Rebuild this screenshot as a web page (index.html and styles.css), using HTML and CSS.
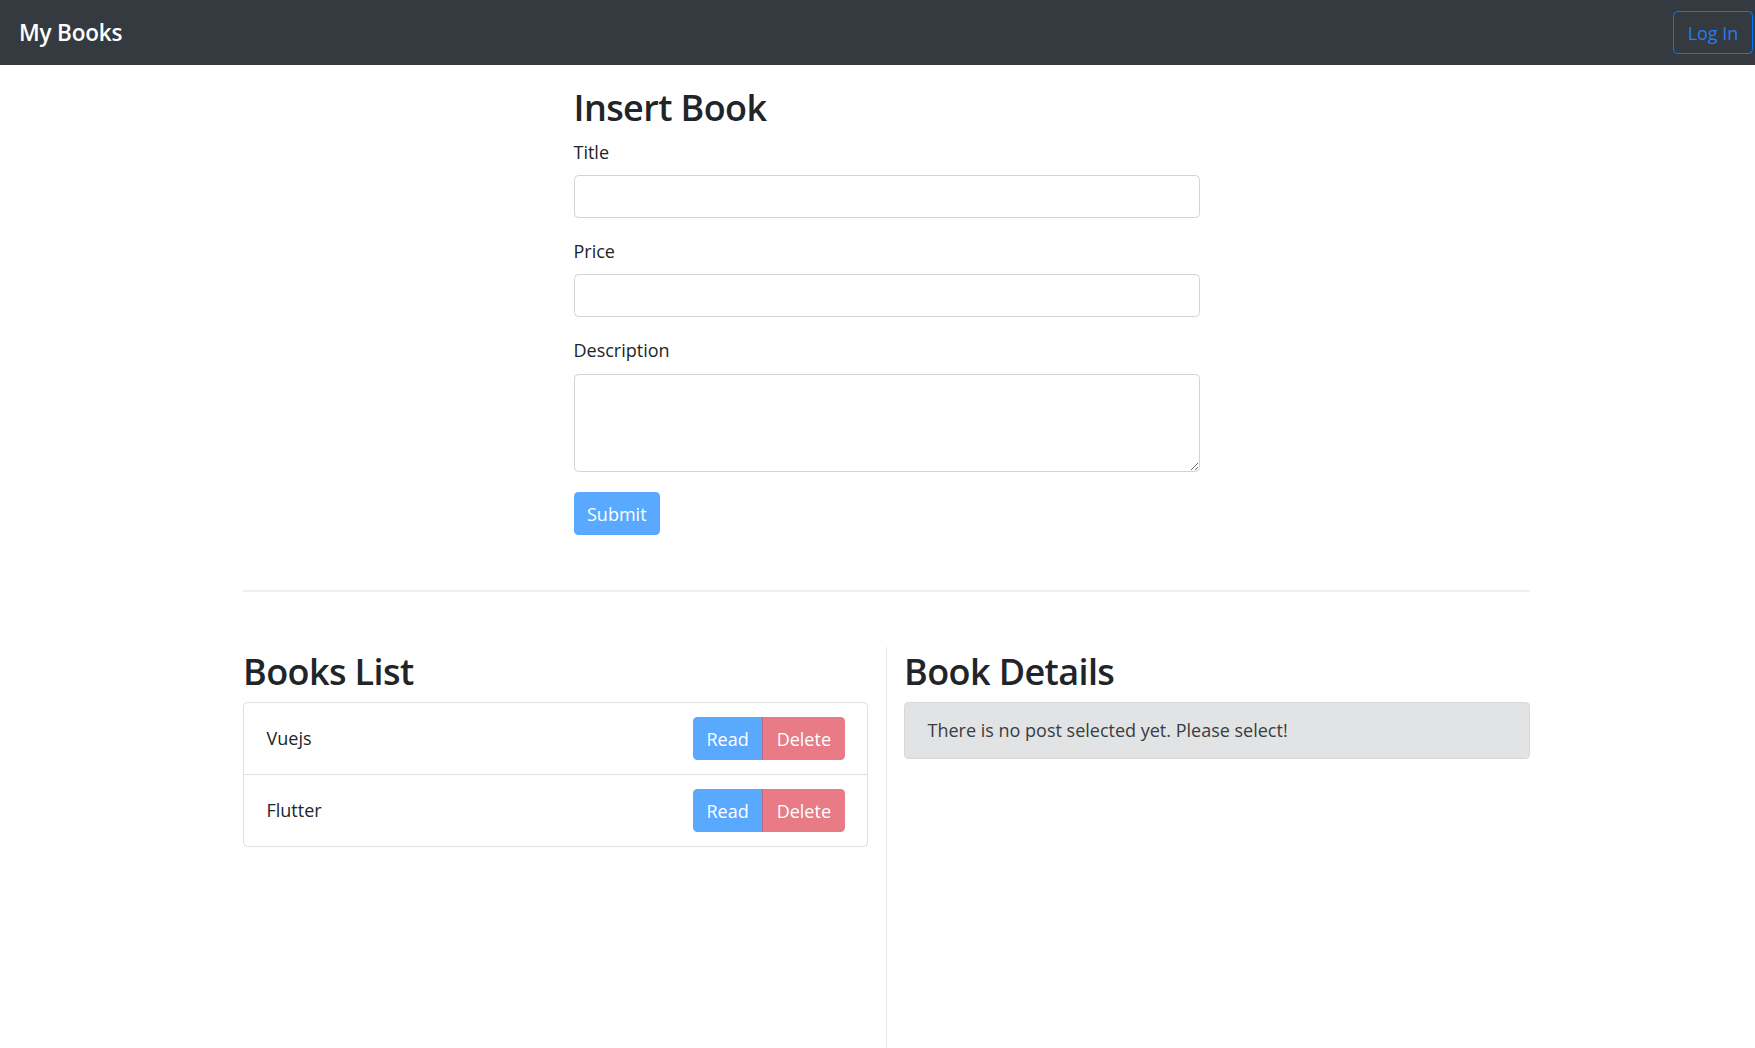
FILE: index.html
```html
<!DOCTYPE html>
<html lang="en">
<head>
<meta charset="utf-8">
<title>My Books</title>
<link rel="stylesheet" href="styles.css">
</head>
<body>
<nav class="navbar">
  <a class="brand" href="#">My Books</a>
  <button class="btn-login" type="button">Log In</button>
</nav>
<main class="container">
  <section class="insert">
    <h2 class="heading">Insert Book</h2>
    <form>
      <div class="form-group">
        <label for="title">Title</label>
        <input id="title" class="form-control" type="text">
      </div>
      <div class="form-group">
        <label for="price">Price</label>
        <input id="price" class="form-control" type="text">
      </div>
      <div class="form-group form-group-area">
        <label for="desc">Description</label>
        <textarea id="desc" class="form-control textarea" rows="3"></textarea>
      </div>
      <button class="btn btn-primary" type="button">Submit</button>
    </form>
  </section>
  <hr class="divider">
  <div class="row">
    <section class="col col-left">
      <h2 class="heading">Books List</h2>
      <ul class="list-group">
        <li class="list-item">
          <span>Vuejs</span>
          <div class="btn-group">
            <button class="btn btn-primary btn-first" type="button">Read</button>
            <button class="btn btn-danger btn-last" type="button">Delete</button>
          </div>
        </li>
        <li class="list-item">
          <span>Flutter</span>
          <div class="btn-group">
            <button class="btn btn-primary btn-first" type="button">Read</button>
            <button class="btn btn-danger btn-last" type="button">Delete</button>
          </div>
        </li>
      </ul>
    </section>
    <section class="col col-right">
      <h2 class="heading">Book Details</h2>
      <div class="alert">There is no post selected yet. Please select!</div>
    </section>
  </div>
</main>
</body>
</html>
```
FILE: styles.css
```css
* { box-sizing: border-box; }
html, body { margin: 0; padding: 0; }
body {
  font-family: "Open Sans", "Noto Sans", sans-serif;
  font-size: 18px;
  line-height: 1.5;
  color: #212529;
  background: #fff;
}
.navbar {
  height: 65px;
  background: #343a40;
  display: flex;
  align-items: center;
  justify-content: space-between;
  padding: 0 2px 0 19px;
}
.brand {
  color: #fff;
  font-size: 22.5px;
  font-weight: 600;
  letter-spacing: -0.2px;
  text-decoration: none;
}
.btn-login {
  height: 43px;
  width: 80px;
  background: transparent;
  border: 1px solid #007bff;
  border-radius: 4.5px;
  color: #2a7ae8;
  font-family: inherit;
  font-size: 18px;
  padding: 0;
}
.container {
  width: 1287px;
  margin-left: 243px;
}
.insert {
  width: 626px;
  margin: 0 auto;
  padding-top: 21px;
}
.heading {
  font-size: 36px;
  font-weight: 600;
  letter-spacing: -0.6px;
  line-height: 1.2;
  margin: 0 0 10px;
}
.form-group { margin-bottom: 20px; }
.form-group label {
  display: block;
  margin-bottom: 9px;
}
.form-group-area label { margin-bottom: 10px; }
.form-control {
  display: block;
  width: 100%;
  height: 43px;
  border: 1px solid #ced4da;
  border-radius: 4.5px;
  font-family: inherit;
  font-size: 18px;
  padding: 6.75px 13.5px;
  color: #495057;
}
.textarea {
  height: 98px;
  resize: vertical;
}
.btn {
  height: 43px;
  padding: 0 13.5px;
  border: none;
  border-radius: 4.5px;
  color: #fff;
  font-family: inherit;
  font-size: 18px;
}
.btn-primary { background: #59a9ff; }
.btn-danger { background: #e87b86; }
.divider {
  border: 0;
  border-top: 2px solid #efefef;
  margin: 55px 0 55px;
}
.row {
  display: grid;
  grid-template-columns: 643px 644px;
}
.col-left { padding-right: 18px; }
.col-right {
  border-left: 1px solid #e6e6e6;
  padding-left: 17px;
  min-height: 401px;
}
.col .heading {
  padding-top: 3px;
  margin-bottom: 9px;
}
.list-group {
  list-style: none;
  margin: 0;
  padding: 0;
  border: 1px solid rgba(0,0,0,.125);
  border-radius: 4.5px;
}
.list-item {
  display: flex;
  justify-content: space-between;
  align-items: center;
  padding: 14px 22.5px;
}
.list-item + .list-item { border-top: 1px solid rgba(0,0,0,.125); }
.btn-group { display: flex; }
.btn-first { border-radius: 4.5px 0 0 4.5px; }
.btn-last {
  border-radius: 0 4.5px 4.5px 0;
  border-left: 1px solid #b86a86;
}
.alert {
  background: #e2e3e5;
  border: 1px solid #d6d8db;
  border-radius: 4.5px;
  color: #383d41;
  padding: 14px 22.5px;
}
```
